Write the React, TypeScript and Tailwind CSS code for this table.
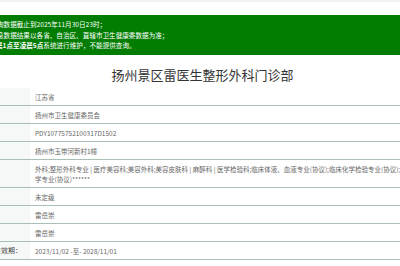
import React from 'react'

const rows: { label?: string; lines: string[]; tall?: boolean }[] = [
  { lines: ['江苏省'] },
  { lines: ['扬州市卫生健康委员会'] },
  { lines: ['PDY10775752100317D1502'] },
  { lines: ['扬州市玉带河新村1幢'] },
  {
    lines: [
      '外科;整形外科专业 | 医疗美容科;美容外科;美容皮肤科 | 麻醉科 | 医学检验科;临床体液、血液专业(协议);临床化学检验专业(协议);临床免疫、血清',
      '学专业(协议)******',
    ],
    tall: true,
  },
  { lines: ['未定级'] },
  { lines: ['雷岳崇'] },
  { lines: ['雷岳崇'] },
  { label: '有效期：', lines: ['2023/11/02 -至- 2028/11/01'] },
]

export default function App() {
  return (
    <div
      className="w-[400px] h-[266px] overflow-hidden bg-white"
      style={{ fontFamily: '"Noto Sans CJK SC", "Noto Sans", sans-serif' }}
    >
      {/* top strip */}
      <div className="h-[15px] border-t-[2px] border-[#f1f1f1]" />

      {/* notice banner */}
      <div className="h-[40px] bg-[#027d02] pt-[4px] text-white text-[6.6px] leading-[10.5px] whitespace-nowrap overflow-hidden">
        <div className="-ml-[3px]">询数据截止到2025年11月30日23时；</div>
        <div className="-ml-[3px]">息数据结果以各省、自治区、直辖市卫生健康委数据为准；</div>
        <div className="-ml-[4px]">
          <span className="font-bold">晨1点至凌晨5点</span>系统进行维护，不能提供查询。
        </div>
      </div>

      {/* title */}
      <h1 className="mt-[12px] mb-[5px] text-center text-[13px] leading-[16px] text-[#333] pl-[5px]">
        扬州景区雷医生整形外科门诊部
      </h1>

      {/* info table */}
      <div>
        {rows.map((row, i) => (
          <div
            key={i}
            className={`flex border-b border-[#a9c0b7] ${row.tall ? 'h-[28px]' : 'h-[18px]'}`}
          >
            <div className="w-[30px] shrink-0 bg-[#f7f8f8] flex items-center justify-end pr-[8px] overflow-hidden whitespace-nowrap text-[7px] text-[#444]">
              {row.label}
            </div>
            <div className="flex-1 min-w-0 pl-[5px] flex flex-col justify-center overflow-hidden text-[6.5px] leading-[10px] text-[#666] whitespace-nowrap">
              {row.lines.map((l, j) => (
                <div key={j}>{l}</div>
              ))}
            </div>
          </div>
        ))}
      </div>
    </div>
  )
}
